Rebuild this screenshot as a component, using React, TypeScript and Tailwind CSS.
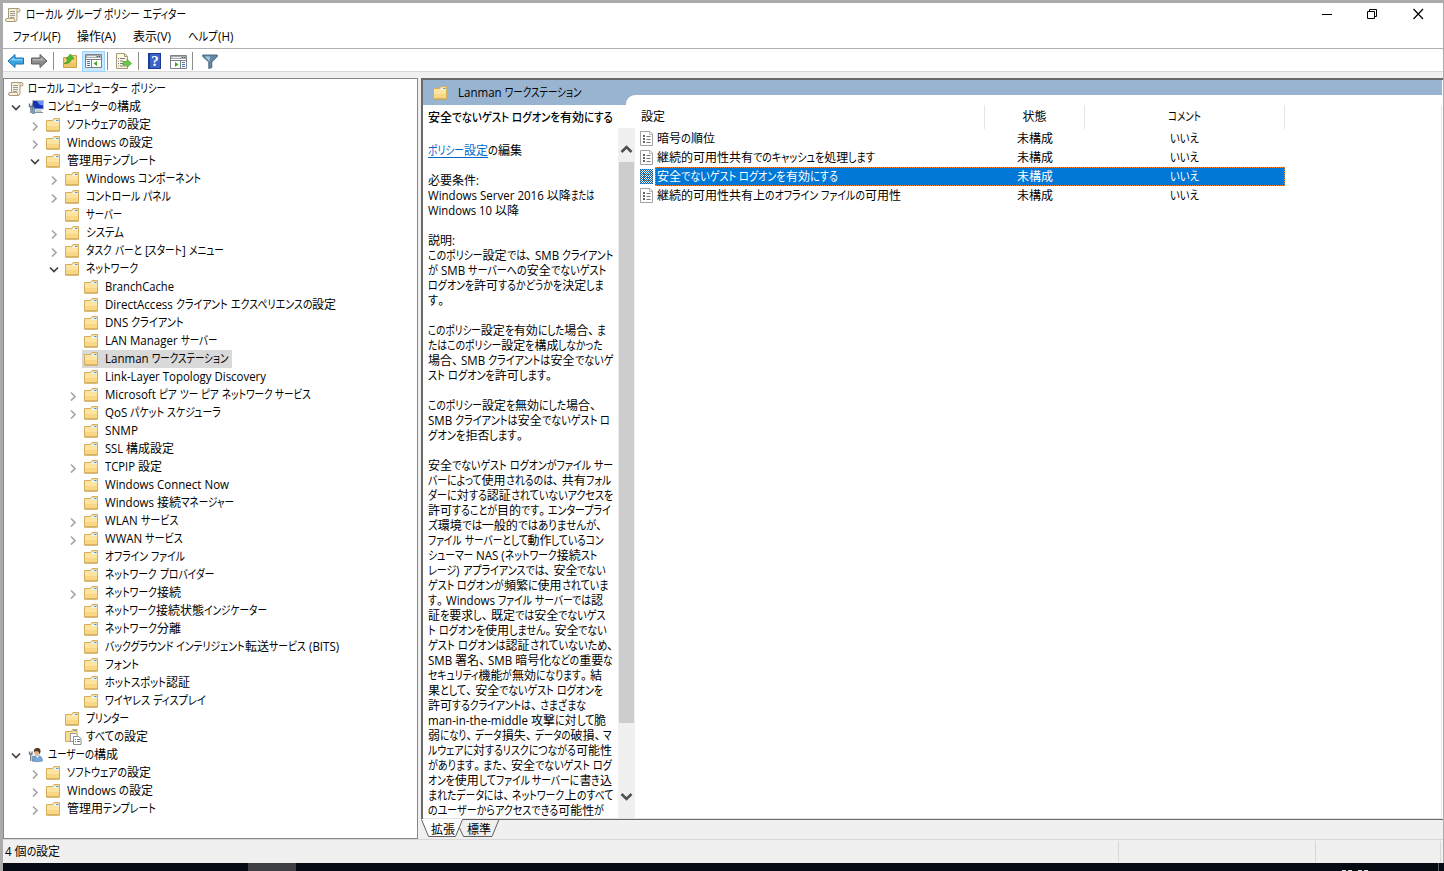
import React, { useLayoutEffect, useRef } from "react";
import { clsx } from "clsx";

/* ---------- text ---------- */

const MARK = /[\u3001\u3002]/;
const KANA = /[\u3040-\u30ff]/;
const LATIN = /[ -~]/;
const MARK_WIDTH = 9;

type RunKind = "kana" | "latin" | "kanji" | "mark";

function splitRuns(text: string) {
  const runs: { kind: RunKind; text: string }[] = [];
  for (const ch of text) {
    const kind: RunKind = MARK.test(ch) ? "mark" : KANA.test(ch) ? "kana" : LATIN.test(ch) ? "latin" : "kanji";
    const last = runs[runs.length - 1];
    if (last && last.kind === kind) last.text += ch;
    else runs.push({ kind, text: ch });
  }
  return runs;
}

/**
 * UiText - one line of UI text with condensed kana.
 * Kanji keep their full width, kana runs are narrowed until the line is `w` wide.
 */
function UiText({ text, w, className }: { text: string; w: number; className?: string }) {
  const ref = useRef<HTMLSpanElement>(null);

  useLayoutEffect(() => {
    const runs = Array.from(ref.current!.children) as HTMLElement[];
    runs.forEach((r) => {
      r.style.width = "auto";
      r.style.transform = "none";
    });
    const sizes = runs.map((r) =>
      r.dataset.kind === "mark" ? MARK_WIDTH : r.getBoundingClientRect().width,
    );
    const total = (kind: string) =>
      sizes.reduce((sum, s, i) => sum + (runs[i].dataset.kind === kind ? s : 0), 0);
    const kana = total("kana");
    const latin = total("latin");
    const fixed = total("kanji") + total("mark");
    const latinScale = kana ? 0.96 : latin ? (w - fixed) / latin : 1;
    const kanaScale = kana ? (w - fixed - latin * latinScale) / kana : 1;
    runs.forEach((r, i) => {
      const kind = r.dataset.kind;
      const scale = kind === "kana" ? kanaScale : kind === "latin" ? latinScale : 1;
      r.style.width = `${sizes[i] * scale}px`;
      r.style.transform = `scaleX(${scale})`;
    });
  }, [text, w]);

  return (
    <span ref={ref} className={clsx("inline-flex shrink-0 whitespace-pre", className)}>
      {splitRuns(text).map((run, i) => (
        <span key={i} data-kind={run.kind} className="block shrink-0 origin-left">
          {run.text}
        </span>
      ))}
    </span>
  );
}

/* ---------- icons ---------- */

function ScrollIcon() {
  return (
    <svg width="16" height="16" viewBox="0 0 16 16" className="shrink-0">
      <path d="M3.500 1.500H13q2 0 2 2T13 5h-1v7.500q0 2-2 2H2q-1.500 0-1.500-1.500T2 11.500h1.500z" fill="#f7f0dc" stroke="#a89a78" />
      <path d="M12 5V3q0-1.500 1.500-1.500" fill="none" stroke="#b8a984" />
      <path d="M3.500 11.500h6V13q0 1.500 1 1.500" fill="none" stroke="#c0ad82" />
      <path d="M5 4.500h5M5 6.500h5M5 8.500h5M5 10.500h4" stroke="#9a9a9a" />
    </svg>
  );
}

function FolderIcon() {
  return (
    <svg width="15" height="14" viewBox="0 0 15 14" className="shrink-0">
      <path d="M.5 2.500h6l1.500-2h5.500v12.500H.5z" fill="#f0cc78" stroke="#d3ae5c" />
      <path d="M8 1.500h5V4H7z" fill="#f6f1de" />
      <path d="M10 2.500h2.500" stroke="#4a9be0" />
      <path d="M1 3h5.500l1 1H13v4.500H1z" fill="#fde4a0" />
      <path d="M1 8h12v4.500H1z" fill="#f9d785" />
      <path d="M.5 13h13" stroke="#c79f4c" />
    </svg>
  );
}

function AllSettingsIcon() {
  return (
    <svg width="17" height="16" viewBox="0 0 17 16" className="shrink-0">
      <path d="M.5 2.500h6l1-2H12v12H.5z" fill="#fadc8d" stroke="#d0aa56" />
      <path d="M8.500 1.500h3" stroke="#4a9be0" />
      <path d="M5.500 4.500h5l2 2v6h-7z" fill="#fff" stroke="#9b9b9b" />
      <path d="M8.500 7.500h5l2.500 2v6H8.500z" fill="#fff" stroke="#8d8d8d" />
      <path d="M10 10.500h1M12 10.500h3M10 12.500h1M12 12.500h3" stroke="#777" />
    </svg>
  );
}

function ComputerIcon() {
  return (
    <svg width="16" height="16" viewBox="0 0 16 16" className="shrink-0">
      <path d="M4.500 1.500h11V10h-11z" fill="#1430b8" stroke="#b7bcc6" />
      <path d="M9 2h6v4.500q-4 0-6-4.500z" fill="#6f93f2" />
      <path d="M8 10.500h5l1 2.500H7z" fill="#c9ccd2" />
      <path d="M7 13.500h8" stroke="#8b8f98" />
      <path d="M1.500 4.500v3h3v-3M3 7v7" fill="none" stroke="#6b7785" strokeWidth="1.500" />
      <path d="M4.500 8h2v6.500h-2z" fill="#7fa7cf" stroke="#45698f" strokeWidth=".6" />
    </svg>
  );
}

function UserIcon() {
  return (
    <svg width="16" height="16" viewBox="0 0 16 16" className="shrink-0">
      <path d="M4.500 14q0-5.500 5-5.500t5 5.500q-5 1.500-10 0z" fill="#79a9d8" stroke="#5580ad" strokeWidth=".6" />
      <path d="M8 8.500l1.500 2.500L11 8.500z" fill="#fff" />
      <circle cx="9" cy="5.200" r="3" fill="#e0b48c" />
      <path d="M5.700 4.800q0-4 4-3.800 3.300.3 2.800 4l-1 2.200q-.3-3-2.300-3.200z" fill="#503521" />
      <path d="M1.500 4.500V7H4V4.500M2.750 7v7" fill="none" stroke="#6e7882" strokeWidth="1.300" />
      <path d="M4.500 9H6v5H4.500z" fill="#8db2d8" stroke="#49709b" strokeWidth=".5" />
    </svg>
  );
}

function SettingIcon({ selected }: { selected?: boolean }) {
  return (
    <svg width="13" height="15" viewBox="0 0 13 15" className="shrink-0">
      <defs>
        <pattern id="dither" width="2" height="2" patternUnits="userSpaceOnUse">
          <path d="M0 0h1v1H0zM1 1h1v1H1z" fill="#0063b5" shapeRendering="crispEdges" />
        </pattern>
      </defs>
      <path d="M.5.500H10l2.500 2.500v11.500H.5z" fill="#fff" stroke="#a2a2a2" />
      <path d="M9.500.5v3h3" fill="none" stroke="#b5b5b5" />
      <path d="M3 5h2M3 8h2M3 11h2" stroke="#333" strokeWidth="1.600" />
      <path d="M6.500 5.500h4M6.500 8.500h4M6.500 11.500h4" stroke="#777" />
      {selected && <path d="M0 0h13v15H0z" fill="url(#dither)" />}
    </svg>
  );
}

function Chevron({ open }: { open?: boolean }) {
  return (
    <svg width="10" height="10" viewBox="0 0 10 10" className="shrink-0">
      {open ? (
        <path d="M1 2.500l4 4 4-4" fill="none" stroke="#404040" strokeWidth="1.700" />
      ) : (
        <path d="M3 1.500l4 4-4 4" fill="none" stroke="#a6a6a6" strokeWidth="1.700" />
      )}
    </svg>
  );
}

function ArrowIcon({ back }: { back?: boolean }) {
  return back ? (
    <svg width="18" height="16" viewBox="0 0 18 16" className="shrink-0">
      <path d="M1 8l7-6.500V5h8.500v6H8v3.500z" fill="#3ba5e4" stroke="#1f70ad" />
      <path d="M3 7.500L7 4v2h8.500v1.500z" fill="#86d0f5" />
    </svg>
  ) : (
    <svg width="18" height="16" viewBox="0 0 18 16" className="shrink-0">
      <path d="M17 8l-7-6.500V5H1.500v6H10v3.500z" fill="#8c8c8c" stroke="#5f5f5f" />
      <path d="M15 7.500L11 4v2H2.500v1.500z" fill="#b4b4b4" />
    </svg>
  );
}

function UpFolderIcon() {
  return (
    <svg width="16" height="16" viewBox="0 0 16 16" className="shrink-0">
      <path d="M1.500 4.500h7l1.500-2h4.500v12h-13z" fill="#f3d27d" stroke="#c9a24e" />
      <path d="M2 10h12v4H2z" fill="#edc566" />
      <path d="M2 10.500q3.500-1 4-4.500H4l4.500-5L12 6H9.500q-1 5-7.500 4.500z" fill="#4fbd2e" stroke="#358c1d" strokeWidth=".6" />
    </svg>
  );
}

function PaneIcon({ right }: { right?: boolean }) {
  return (
    <svg width="17" height="14" viewBox="0 0 17 14" className="shrink-0">
      <path d="M.5.500h16v13H.5z" fill="#fff" stroke="#7d8288" />
      <path d="M1 1h15v3H1z" fill="#a6abb1" />
      <path d="M2 2.500h9" stroke="#e9e9e9" />
      <path d="M12 2.500h1M14 2.500h1" stroke="#555" />
      <path d="M1 5.500h15" stroke="#7d8288" />
      {right ? (
        <>
          <path d="M10.500 5.500v8" stroke="#7d8288" />
          <path d="M12 7.500h3M12 9.500h3M12 11.500h3" stroke="#4776ad" />
          <path d="M5 7l3.500 2.500L5 12z" fill="#3fa821" />
        </>
      ) : (
        <>
          <path d="M6.500 5.500v8" stroke="#7d8288" />
          <path d="M2 7.500h3M2 9.500h3M2 11.500h3" stroke="#4776ad" />
          <path d="M12 7L8.500 9.500 12 12z" fill="#3fa821" />
        </>
      )}
    </svg>
  );
}

function ExportIcon() {
  return (
    <svg width="17" height="16" viewBox="0 0 17 16" className="shrink-0">
      <path d="M1.500.5h8l3 3v12h-11z" fill="#fff8de" stroke="#a79a79" />
      <path d="M9.500.5v3h3" fill="none" stroke="#a79a79" />
      <path d="M3 5.500h1M5 5.500h5M3 8h1M5 8h3M3 10.500h1M5 10.500h3M3 13h1M5 13h6" stroke="#7a7a8e" />
      <path d="M8 8.500h4V6l4.500 4.500L12 14.500V12H8z" fill="#6bc84d" stroke="#4ba32d" strokeWidth=".7" />
    </svg>
  );
}

function HelpIcon() {
  return (
    <span className="flex h-4 w-[13px] shrink-0 items-center justify-center border border-l-2 border-[#1c3a91] bg-[#3c63c8] font-['Liberation_Serif',serif] text-[15px] leading-none font-bold text-white">
      ?
    </span>
  );
}

function FilterIcon() {
  return (
    <svg width="16" height="15" viewBox="0 0 16 15" className="shrink-0">
      <path d="M.7 1h14.600v1.500L9.800 8v5.500l-3 1V8L.7 2.500z" fill="#5f89a6" stroke="#49616f" strokeWidth=".9" />
      <path d="M3 2.500h5L7.500 7.500z" fill="#a9cadd" />
    </svg>
  );
}

/* ---------- data ---------- */

type NodeIcon = "root" | "computer" | "user" | "folder" | "all";

interface TreeNode {
  level: number;
  text: string;
  w: number;
  icon?: NodeIcon;
  state?: "open" | "closed";
  selected?: boolean;
}

const TREE: TreeNode[] = [
  { level: 0, text: "ローカル コンピューター ポリシー", w: 138, icon: "root" },
  { level: 1, text: "コンピューターの構成", w: 93, icon: "computer", state: "open" },
  { level: 2, text: "ソフトウェアの設定", w: 84, state: "closed" },
  { level: 2, text: "Windows の設定", w: 86, state: "closed" },
  { level: 2, text: "管理用テンプレート", w: 89, state: "open" },
  { level: 3, text: "Windows コンポーネント", w: 115, state: "closed" },
  { level: 3, text: "コントロール パネル", w: 85, state: "closed" },
  { level: 3, text: "サーバー", w: 36 },
  { level: 3, text: "システム", w: 38, state: "closed" },
  { level: 3, text: "タスク バーと [スタート] メニュー", w: 138, state: "closed" },
  { level: 3, text: "ネットワーク", w: 52, state: "open" },
  { level: 4, text: "BranchCache", w: 69 },
  { level: 4, text: "DirectAccess クライアント エクスペリエンスの設定", w: 231 },
  { level: 4, text: "DNS クライアント", w: 79 },
  { level: 4, text: "LAN Manager サーバー", w: 112 },
  { level: 4, text: "Lanman ワークステーション", w: 123, selected: true },
  { level: 4, text: "Link-Layer Topology Discovery", w: 161 },
  { level: 4, text: "Microsoft ピア ツー ピア ネットワーク サービス", w: 206, state: "closed" },
  { level: 4, text: "QoS パケット スケジューラ", w: 116, state: "closed" },
  { level: 4, text: "SNMP", w: 33 },
  { level: 4, text: "SSL 構成設定", w: 69 },
  { level: 4, text: "TCPIP 設定", w: 57, state: "closed" },
  { level: 4, text: "Windows Connect Now", w: 124 },
  { level: 4, text: "Windows 接続マネージャー", w: 129 },
  { level: 4, text: "WLAN サービス", w: 73, state: "closed" },
  { level: 4, text: "WWAN サービス", w: 78, state: "closed" },
  { level: 4, text: "オフライン ファイル", w: 80 },
  { level: 4, text: "ネットワーク プロバイダー", w: 109 },
  { level: 4, text: "ネットワーク接続", w: 76, state: "closed" },
  { level: 4, text: "ネットワーク接続状態インジケーター", w: 162 },
  { level: 4, text: "ネットワーク分離", w: 76 },
  { level: 4, text: "バックグラウンド インテリジェント転送サービス (BITS)", w: 234 },
  { level: 4, text: "フォント", w: 34 },
  { level: 4, text: "ホットスポット認証", w: 85 },
  { level: 4, text: "ワイヤレス ディスプレイ", w: 101 },
  { level: 3, text: "プリンター", w: 43 },
  { level: 3, text: "すべての設定", w: 62, icon: "all" },
  { level: 1, text: "ユーザーの構成", w: 70, icon: "user", state: "open" },
  { level: 2, text: "ソフトウェアの設定", w: 84, state: "closed" },
  { level: 2, text: "Windows の設定", w: 86, state: "closed" },
  { level: 2, text: "管理用テンプレート", w: 89, state: "closed" },
];

const INDENT = ["pl-[2px]", "pl-[6px]", "pl-[25px]", "pl-[44px]", "pl-[63px]"];

const DETAIL: [string, number][] = [
  ["必要条件:", 51],
  ["Windows Server 2016 以降または", 166],
  ["Windows 10 以降", 91],
  ["", 0],
  ["説明:", 27],
  ["このポリシー設定では、SMB クライアント", 185],
  ["が SMB サーバーへの安全でないゲスト", 178],
  ["ログオンを許可するかどうかを決定しま", 176],
  ["す。", 19],
  ["", 0],
  ["このポリシー設定を有効にした場合、ま", 178],
  ["たはこのポリシー設定を構成しなかった", 175],
  ["場合、SMB クライアントは安全でないゲ", 185],
  ["スト ログオンを許可します。", 127],
  ["", 0],
  ["このポリシー設定を無効にした場合、", 171],
  ["SMB クライアントは安全でないゲスト ロ", 182],
  ["グオンを拒否します。", 98],
  ["", 0],
  ["安全でないゲスト ログオンがファイル サー", 185],
  ["バーによって使用されるのは、共有フォル", 183],
  ["ダーに対する認証されていないアクセスを", 185],
  ["許可することが目的です。エンタープライ", 183],
  ["ズ環境では一般的ではありませんが、", 177],
  ["ファイル サーバーとして動作しているコン", 176],
  ["シューマー NAS (ネットワーク接続スト", 169],
  ["レージ) アプライアンスでは、安全でない", 178],
  ["ゲスト ログオンが頻繁に使用されていま", 180],
  ["す。Windows ファイル サーバーでは認", 175],
  ["証を要求し、既定では安全でないゲス", 178],
  ["ト ログオンを使用しません。安全でない", 179],
  ["ゲスト ログオンは認証されていないため、", 188],
  ["SMB 署名、SMB 暗号化などの重要な", 185],
  ["セキュリティ機能が無効になります。結", 174],
  ["果として、安全でないゲスト ログオンを", 175],
  ["許可するクライアントは、さまざまな", 158],
  ["man-in-the-middle 攻撃に対して脆", 178],
  ["弱になり、データ損失、データの破損、マ", 184],
  ["ルウェアに対するリスクにつながる可能性", 184],
  ["があります。また、安全でないゲスト ログ", 184],
  ["オンを使用してファイル サーバーに書き込", 184],
  ["まれたデータには、ネットワーク上のすべて", 185],
  ["のユーザーからアクセスできる可能性が", 176],
];

const SETTINGS = [
  { text: "暗号の順位", w: 58 },
  { text: "継続的可用性共有でのキャッシュを処理します", w: 218 },
  { text: "安全でないゲスト ログオンを有効にする", w: 181, selected: true },
  { text: "継続的可用性共有上のオフライン ファイルの可用性", w: 244 },
];

/* ---------- panels ---------- */

function TitleBar() {
  return (
    <div className="flex h-[23px] items-center pl-[2px]">
      <ScrollIcon />
      <UiText text="ローカル グループ ポリシー エディター" w={160} className="ml-[5px]" />
      <div className="mr-[19px] mb-[2px] ml-auto flex items-center gap-[35px]">
        <svg width="11" height="12" viewBox="0 0 11 12">
          <path d="M1 6.500h10" stroke="#000" />
        </svg>
        <svg width="11" height="12" viewBox="0 0 11 12">
          <path d="M.5 3.500h7v7h-7zM2.500 3V1.500h7v7H8" fill="none" stroke="#000" />
        </svg>
        <svg width="11" height="12" viewBox="0 0 11 12">
          <path d="M.5 1l9.500 10M10 1L.5 11" stroke="#000" strokeWidth="1.200" />
        </svg>
      </div>
    </div>
  );
}

function MenuBar() {
  return (
    <div className="flex h-[23px] items-center border-b border-[#b0b0b0] pl-[10px]">
      <UiText text="ファイル(F)" w={48} />
      <UiText text="操作(A)" w={39} className="ml-4" />
      <UiText text="表示(V)" w={38} className="ml-[17px]" />
      <UiText text="ヘルプ(H)" w={45} className="ml-[17px]" />
    </div>
  );
}

function Divider({ className }: { className?: string }) {
  return <div className={clsx("h-[18px] w-px shrink-0 bg-[#8d8d8d]", className)} />;
}

function Toolbar() {
  return (
    <div className="flex h-[23px] items-center border-b border-[#d9d9d9] pt-[2px] pl-[4px]">
      <ArrowIcon back />
      <div className="ml-[5px] flex">
        <ArrowIcon />
      </div>
      <Divider className="ml-[5px]" />
      <div className="ml-[8px] flex">
        <UpFolderIcon />
      </div>
      <div className="ml-[4px] flex h-[21px] w-[23px] shrink-0 items-center justify-center border border-[#99d1ff] bg-[#cce8ff]">
        <PaneIcon />
      </div>
      <Divider className="ml-[2px]" />
      <div className="ml-[7px] flex">
        <ExportIcon />
      </div>
      <Divider className="ml-[6px]" />
      <div className="ml-[9px] flex">
        <HelpIcon />
      </div>
      <div className="ml-[9px] flex pt-[2px]">
        <PaneIcon right />
      </div>
      <Divider className="ml-[5px]" />
      <div className="ml-[9px] flex">
        <FilterIcon />
      </div>
    </div>
  );
}

function NodeGlyph({ icon = "folder" }: { icon?: NodeIcon }) {
  if (icon === "root") return <ScrollIcon />;
  if (icon === "computer") return <ComputerIcon />;
  if (icon === "user") return <UserIcon />;
  if (icon === "all") return <AllSettingsIcon />;
  return <FolderIcon />;
}

function TreeRow({ node }: { node: TreeNode }) {
  return (
    <div className={clsx("flex h-[18px] shrink-0 items-center", INDENT[node.level])}>
      {node.level > 0 && (
        <div className="mr-[2px] flex h-full w-3 shrink-0 items-center pt-px">
          {node.state && <Chevron open={node.state === "open"} />}
        </div>
      )}
      <div className={clsx("flex h-full items-center pl-px", node.selected && "bg-[#d9d9d9] pr-1")}>
        <div
          className={clsx(
            "flex shrink-0",
            node.level === 0 ? "w-[19px]" : "w-[21px]",
            node.level === 1 && "pl-[2px]",
            node.level > 1 && "pl-px",
          )}
        >
          <NodeGlyph icon={node.icon} />
        </div>
        <UiText text={node.text} w={node.w} className="ml-px" />
      </div>
    </div>
  );
}

function DetailPane() {
  return (
    <div className="flex w-[195px] shrink-0 flex-col overflow-hidden pl-[5px] leading-[15px]">
      <div className="mt-[5px] flex h-[15px] font-medium">
        <UiText text="安全でないゲスト ログオンを有効にする" w={185} />
      </div>
      <div className="mt-[18px] mb-[15px] flex h-[15px]">
        <span className="border-b border-[#0066cc] text-[#0066cc]">
          <UiText text="ポリシー設定" w={60} />
        </span>
        <UiText text="の編集" w={34} />
      </div>
      {DETAIL.map(([text, w], i) => (
        <div key={i} className="flex h-[15px] shrink-0">
          {text && <UiText text={text} w={w} />}
        </div>
      ))}
    </div>
  );
}

function ScrollBar() {
  return (
    <div className="mt-[23px] flex w-[17px] shrink-0 flex-col items-center bg-[#f0f0f0]">
      <svg width="13" height="34" viewBox="0 0 13 34">
        <path d="M1.500 24l5-5 5 5" fill="none" stroke="#505050" strokeWidth="2.600" />
      </svg>
      <div className="h-[561px] w-[15px] bg-[#cdcdcd]" />
      <svg width="13" height="95" viewBox="0 0 13 95" className="shrink-0">
        <path d="M1.500 71l5 5 5-5" fill="none" stroke="#505050" strokeWidth="2.600" />
      </svg>
    </div>
  );
}

function SettingsList() {
  return (
    <div className="flex-1 pl-[5px]">
      <div className="flex h-6 w-[645px] items-center">
        <div className="flex h-full flex-1 items-center border-r border-[#e5e5e5] pl-px">
          <UiText text="設定" w={24} />
        </div>
        <div className="flex h-full w-[100px] items-center justify-center border-r border-[#e5e5e5]">
          <UiText text="状態" w={24} />
        </div>
        <div className="flex h-full w-[200px] items-center justify-center border-r border-[#e5e5e5]">
          <UiText text="コメント" w={33} />
        </div>
      </div>
      {SETTINGS.map((s) => (
        <div key={s.text} className="flex h-[19px] w-[645px] items-center">
          <SettingIcon selected={s.selected} />
          <div
            className={clsx(
              "ml-[2px] flex h-full flex-1 items-center border",
              s.selected ? "border-dotted border-[#ff8728] bg-[#0078d7] text-white" : "border-transparent",
            )}
          >
            <div className="flex flex-1 pl-px">
              <UiText text={s.text} w={s.w} />
            </div>
            <div className="flex w-[100px] justify-center">
              <UiText text="未構成" w={36} />
            </div>
            <div className="flex w-[199px] justify-center">
              <UiText text="いいえ" w={29} />
            </div>
          </div>
        </div>
      ))}
    </div>
  );
}

function ViewTabs() {
  return (
    <div className="flex h-5 items-center bg-[#f0f0f0]">
      <svg width="80" height="19" viewBox="0 0 80 19" className="-mr-20 self-start">
        <path d="M0 0l7.500 17.500h27L42 0z" fill="#fff" />
        <path d="M.5.5l7 17h27l7-17H78M38.500 9l4 8.500H71l7-17" fill="none" stroke="#606060" />
      </svg>
      <UiText text="拡張" w={24} className="relative ml-[10px] pt-px" />
      <UiText text="標準" w={24} className="relative ml-3 pt-px" />
      <div className="ml-[7px] flex-1 self-start border-t border-[#696969]" />
    </div>
  );
}

function ResultPanel() {
  return (
    <div className="ml-[3px] flex min-w-0 flex-1 flex-col">
      <div className="flex h-[741px] flex-col overflow-hidden border-t-2 border-l-2 border-[#696969] bg-white">
        <div className="mr-px flex h-[25px] shrink-0 bg-[#99b4d1]">
          <div className="flex w-[203px] items-center pl-[10px]">
            <FolderIcon />
            <UiText text="Lanman ワークステーション" w={123} className="ml-[10px]" />
          </div>
          <div className="mt-[15px] flex-1 rounded-tl-[9px] bg-white" />
        </div>
        <div className="mr-px flex min-h-0 flex-1 border-r border-b border-[#e3e3e3]">
          <DetailPane />
          <ScrollBar />
          <SettingsList />
        </div>
      </div>
      <ViewTabs />
    </div>
  );
}

function StatusBar() {
  return (
    <div className="flex h-6 items-center border-t border-[#d7d7d7] pl-[2px]">
      <UiText text="4 個の設定" w={55} />
      <div className="mr-[2px] ml-auto flex h-[21px]">
        <div className="w-[197px] border-l border-[#d7d7d7]" />
        <div className="w-[126px] border-x border-[#d7d7d7]" />
      </div>
    </div>
  );
}

export default function App() {
  return (
    <div className="flex h-[871px] w-[1444px] flex-col overflow-hidden bg-[#ababab] font-['Open_Sans','Noto_Sans_CJK_JP',sans-serif] text-[12px] leading-[18px] text-black [font-feature-settings:'palt']">
      <div className="mt-[3px] mr-px ml-[3px] flex h-[860px] shrink-0 flex-col bg-[#f0f0f0]">
        <div className="bg-white">
          <TitleBar />
          <MenuBar />
          <Toolbar />
        </div>
        <div className="mt-[6px] flex h-[761px] shrink-0">
          <div className="flex w-[415px] shrink-0 flex-col border border-[#828790] bg-white pt-px pl-px">
            {TREE.map((node, i) => (
              <TreeRow key={i} node={node} />
            ))}
          </div>
          <ResultPanel />
        </div>
        <StatusBar />
      </div>
      <div className="ml-[3px] flex h-2 shrink-0 bg-[#060a12]">
        <div className="ml-[245px] w-12 bg-[#3f4045]" />
        <div className="mr-[70px] ml-auto flex items-end gap-[2px]">
          <div className="h-px w-1 bg-[#d8d8d8]" />
          <div className="h-px w-1 bg-[#d8d8d8]" />
          <div className="ml-1 h-px w-1 bg-[#d8d8d8]" />
          <div className="h-px w-1 bg-[#d8d8d8]" />
        </div>
        <div className="mr-[5px] w-px bg-[#5c5f64]" />
      </div>
    </div>
  );
}
